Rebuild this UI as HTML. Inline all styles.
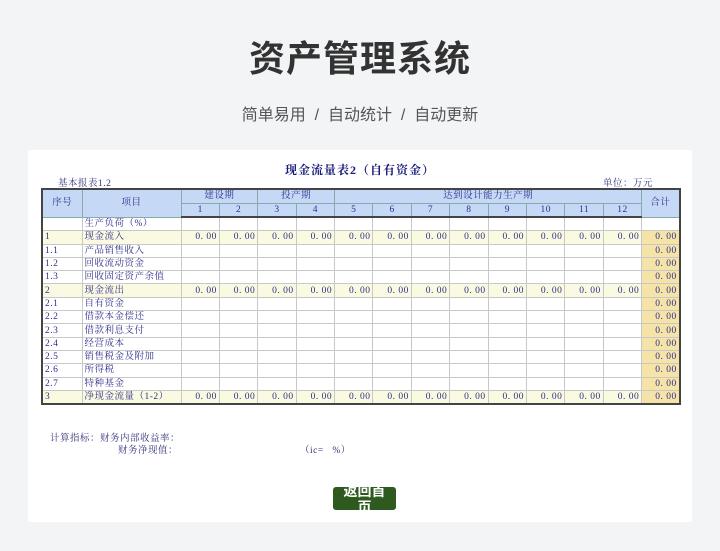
<!DOCTYPE html>
<html><head><meta charset="utf-8"><style>
body{margin:0;width:720px;height:551px;background:#f3f4f6;font-family:"Liberation Serif","Noto Serif CJK SC",serif;position:relative;overflow:hidden}
.h1{position:absolute;top:30px;left:0;width:720px;text-align:center;font:bold 36px "Liberation Sans","Noto Sans CJK SC",sans-serif;color:#333;letter-spacing:1px}
.sub{position:absolute;top:101px;left:0;width:720px;text-align:center;font:16px "Liberation Sans","Noto Sans CJK SC",sans-serif;color:#555}
.card{position:absolute;left:28px;top:150px;width:664px;height:372px;background:#fff}
.t1{position:absolute;top:161px;left:0;width:720px;text-align:center;font-weight:bold;font-size:12px;color:#1a1a7a;letter-spacing:1px}
.s{position:absolute;font-size:9.5px;color:#33337a;letter-spacing:.5px}
table{position:absolute;left:41px;top:188px;border-collapse:collapse;table-layout:fixed;font-size:9.5px;color:#2e2e8a}
td{border:1px solid #c8c8c8;padding:0 2px;height:12.3px;line-height:12px;white-space:nowrap;overflow:hidden;letter-spacing:.5px}
thead td{background:#c5d9f7;text-align:center;border-color:#8aa;height:12.5px}
.y td{background:#fafae2}
td.n{text-align:right}
td.tot{background:#f5e3a8;text-align:right}
table{border:2px solid #444}
thead tr:last-child td{border-bottom:2px solid #444}
.btn{position:absolute;left:333px;top:487px;width:63px;height:23px;background:#2f5a1f;border-radius:3px;color:#fff;font:bold 14px "Liberation Sans","Noto Sans CJK SC",sans-serif;text-align:center;line-height:16px;overflow:hidden}
.btn div{margin-top:-4px}
</style></head><body>
<div class="h1">资产管理系统</div>
<div class="sub">简单易用 &nbsp;/&nbsp; 自动统计 &nbsp;/&nbsp; 自动更新</div>
<div class="card"></div>
<div class="t1">现金流量表2（自有资金）</div>
<div class="s" style="left:58px;top:175px">基本报表1.2</div>
<div class="s" style="left:603px;top:175px">单位：万元</div>
<table>
<colgroup><col style="width:40px"><col style="width:99px"><col span="12" style="width:38.4px"><col style="width:38px"></colgroup>
<thead>
<tr><td rowspan="2">序号</td><td rowspan="2">项目</td><td colspan="2">建设期</td><td colspan="2">投产期</td><td colspan="8">达到设计能力生产期</td><td rowspan="2">合计</td></tr>
<tr><td>1</td><td>2</td><td>3</td><td>4</td><td>5</td><td>6</td><td>7</td><td>8</td><td>9</td><td>10</td><td>11</td><td>12</td></tr>
</thead>
<tbody id="b"></tbody>
</table>
<div class="s" style="left:50px;top:430px">计算指标：财务内部收益率：</div>
<div class="s" style="left:118px;top:442px">财务净现值：</div>
<div class="s" style="left:300px;top:442px">（ic=&nbsp;&nbsp; %）</div>
<div class="btn"><div>返回首<br>页</div></div>
<script>
var rows=[["","生产负荷（%）",0,0],["1","现金流入",1,1],["1.1","产品销售收入",0,1],["1.2","回收流动资金",0,1],["1.3","回收固定资产余值",0,1],["2","现金流出",1,1],["2.1","自有资金",0,1],["2.2","借款本金偿还",0,1],["2.3","借款利息支付",0,1],["2.4","经营成本",0,1],["2.5","销售税金及附加",0,1],["2.6","所得税",0,1],["2.7","特种基金",0,1],["3","净现金流量（1-2）",1,1]];
var h="";rows.forEach(function(r){h+='<tr'+(r[2]?' class="y"':'')+'><td>'+r[0]+'</td><td>'+r[1]+'</td>';for(var i=0;i<12;i++)h+='<td class="n">'+(r[2]?'0. 00':'')+'</td>';h+=r[3]?'<td class="tot">0. 00</td>':'<td></td>';h+='</tr>';});
document.getElementById("b").innerHTML=h;
</script>
</body></html>
